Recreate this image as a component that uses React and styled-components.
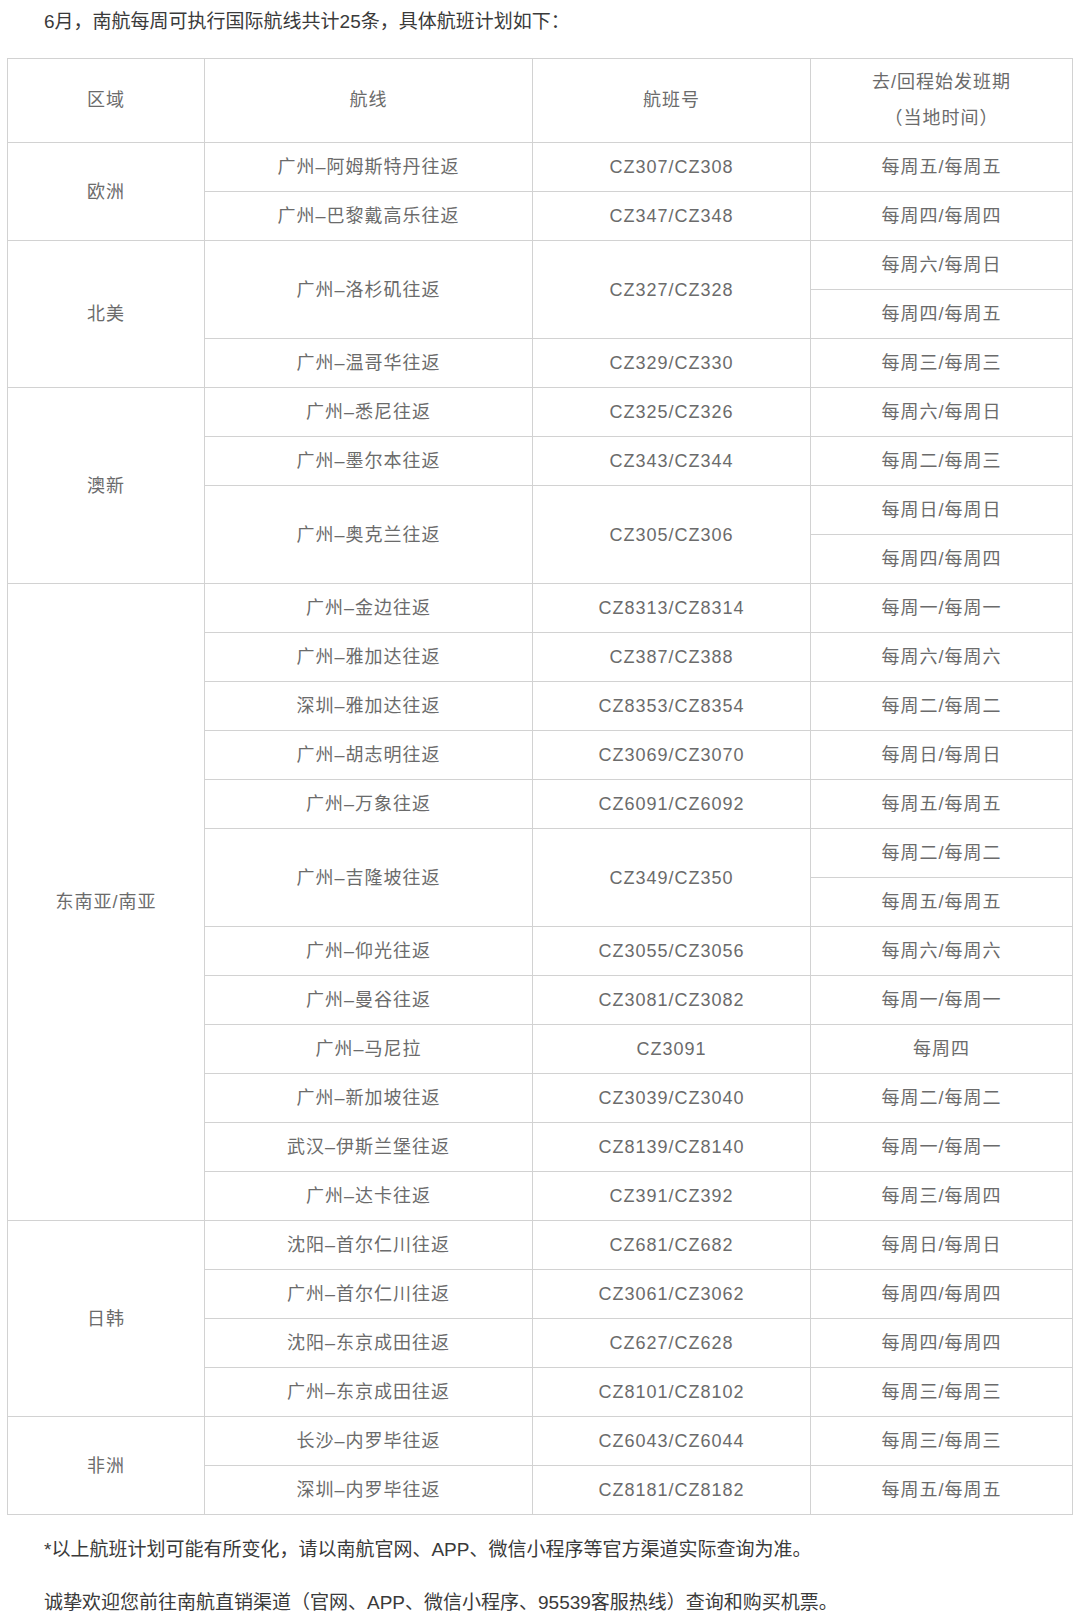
import React from "react";
import styled, { createGlobalStyle } from "styled-components";

const GlobalStyle = createGlobalStyle`
  html, body {
    margin: 0;
    padding: 0;
    background: #ffffff;
  }
  body {
    font-family: "Liberation Sans", "Noto Sans CJK SC", sans-serif;
    -webkit-font-smoothing: antialiased;
  }
`;

// 航线数据：每条航线的班期可能有多行
const regions = [
  {
    name: "欧洲",
    routes: [
      { route: "广州–阿姆斯特丹往返", flight: "CZ307/CZ308", days: ["每周五/每周五"] },
      { route: "广州–巴黎戴高乐往返", flight: "CZ347/CZ348", days: ["每周四/每周四"] },
    ],
  },
  {
    name: "北美",
    routes: [
      { route: "广州–洛杉矶往返", flight: "CZ327/CZ328", days: ["每周六/每周日", "每周四/每周五"] },
      { route: "广州–温哥华往返", flight: "CZ329/CZ330", days: ["每周三/每周三"] },
    ],
  },
  {
    name: "澳新",
    routes: [
      { route: "广州–悉尼往返", flight: "CZ325/CZ326", days: ["每周六/每周日"] },
      { route: "广州–墨尔本往返", flight: "CZ343/CZ344", days: ["每周二/每周三"] },
      { route: "广州–奥克兰往返", flight: "CZ305/CZ306", days: ["每周日/每周日", "每周四/每周四"] },
    ],
  },
  {
    name: "东南亚/南亚",
    routes: [
      { route: "广州–金边往返", flight: "CZ8313/CZ8314", days: ["每周一/每周一"] },
      { route: "广州–雅加达往返", flight: "CZ387/CZ388", days: ["每周六/每周六"] },
      { route: "深圳–雅加达往返", flight: "CZ8353/CZ8354", days: ["每周二/每周二"] },
      { route: "广州–胡志明往返", flight: "CZ3069/CZ3070", days: ["每周日/每周日"] },
      { route: "广州–万象往返", flight: "CZ6091/CZ6092", days: ["每周五/每周五"] },
      { route: "广州–吉隆坡往返", flight: "CZ349/CZ350", days: ["每周二/每周二", "每周五/每周五"] },
      { route: "广州–仰光往返", flight: "CZ3055/CZ3056", days: ["每周六/每周六"] },
      { route: "广州–曼谷往返", flight: "CZ3081/CZ3082", days: ["每周一/每周一"] },
      { route: "广州–马尼拉", flight: "CZ3091", days: ["每周四"] },
      { route: "广州–新加坡往返", flight: "CZ3039/CZ3040", days: ["每周二/每周二"] },
      { route: "武汉–伊斯兰堡往返", flight: "CZ8139/CZ8140", days: ["每周一/每周一"] },
      { route: "广州–达卡往返", flight: "CZ391/CZ392", days: ["每周三/每周四"] },
    ],
  },
  {
    name: "日韩",
    routes: [
      { route: "沈阳–首尔仁川往返", flight: "CZ681/CZ682", days: ["每周日/每周日"] },
      { route: "广州–首尔仁川往返", flight: "CZ3061/CZ3062", days: ["每周四/每周四"] },
      { route: "沈阳–东京成田往返", flight: "CZ627/CZ628", days: ["每周四/每周四"] },
      { route: "广州–东京成田往返", flight: "CZ8101/CZ8102", days: ["每周三/每周三"] },
    ],
  },
  {
    name: "非洲",
    routes: [
      { route: "长沙–内罗毕往返", flight: "CZ6043/CZ6044", days: ["每周三/每周三"] },
      { route: "深圳–内罗毕往返", flight: "CZ8181/CZ8182", days: ["每周五/每周五"] },
    ],
  },
];

const Page = styled.div`
  width: 1080px;
  box-sizing: border-box;
  padding: 0 8px 0 7px;
  color: #333;
`;

const Para = styled.p`
  margin: ${(p) => p.$margin || "0"};
  padding-left: 37px;
  font-size: 19px;
  line-height: ${(p) => p.$lh || "40px"};
  color: #3a3a3a;
  white-space: nowrap;
`;

const Table = styled.table`
  width: 1065px;
  margin-top: 14px;
  border-collapse: collapse;
  table-layout: fixed;
  font-size: 18px;
  letter-spacing: 1px;
  color: #6b6b6b;
`;

const Th = styled.th`
  border: 1px solid #d2d2d2;
  padding: 6px 8px;
  line-height: 35.5px;
  font-weight: normal;
  text-align: center;
  vertical-align: middle;
`;

const Td = styled.td`
  border: 1px solid #d2d2d2;
  padding: 6px 8px;
  line-height: 36px;
  text-align: center;
  vertical-align: middle;
  white-space: nowrap;
`;

function buildRows() {
  const rows = [];
  regions.forEach((region) => {
    const regionSpan = region.routes.reduce((n, r) => n + r.days.length, 0);
    region.routes.forEach((r, ri) => {
      r.days.forEach((day, di) => {
        rows.push(
          <tr key={`${region.name}-${ri}-${di}`}>
            {ri === 0 && di === 0 && <Td rowSpan={regionSpan}>{region.name}</Td>}
            {di === 0 && <Td rowSpan={r.days.length}>{r.route}</Td>}
            {di === 0 && <Td rowSpan={r.days.length}>{r.flight}</Td>}
            <Td>{day}</Td>
          </tr>
        );
      });
    });
  });
  return rows;
}

export default function App() {
  return (
    <>
      <GlobalStyle />
      <Page>
        <Para $lh="44px">6月，南航每周可执行国际航线共计25条，具体航班计划如下：</Para>
        <Table>
          <colgroup>
            <col style={{ width: 197 }} />
            <col style={{ width: 328 }} />
            <col style={{ width: 278 }} />
            <col style={{ width: 262 }} />
          </colgroup>
          <thead>
            <tr>
              <Th>区域</Th>
              <Th>航线</Th>
              <Th>航班号</Th>
              <Th>
                去/回程始发班期
                <br />
                （当地时间）
              </Th>
            </tr>
          </thead>
          <tbody>{buildRows()}</tbody>
        </Table>
        <Para $margin="15px 0 0">*以上航班计划可能有所变化，请以南航官网、APP、微信小程序等官方渠道实际查询为准。</Para>
        <Para $margin="13px 0 0">诚挚欢迎您前往南航直销渠道（官网、APP、微信小程序、95539客服热线）查询和购买机票。</Para>
      </Page>
    </>
  );
}
